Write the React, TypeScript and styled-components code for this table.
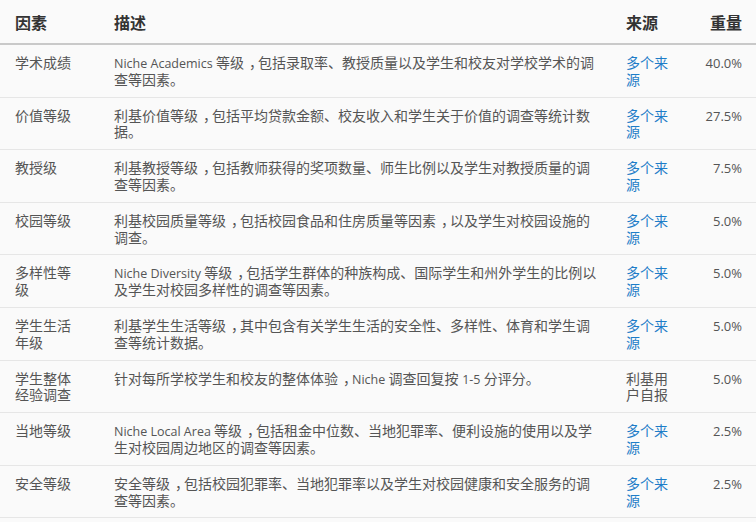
import React from "react";
import styled, { createGlobalStyle } from "styled-components";

const Global = createGlobalStyle`
	html, body {
		margin: 0;
		padding: 0;
		background: #fafafa;
	}
	body {
		font-family: "Open Sans", "Noto Sans CJK SC", sans-serif;
		font-size: 14px;
		color: #555;
	}
	*, *::before, *::after {
		box-sizing: border-box;
	}
`;

const Table = styled.table`
	width: 756px;
	border-collapse: collapse;
	table-layout: fixed;
`;

const Col = styled.col<{ $width: number }>`
	width: ${(p) => p.$width}px;
`;

const HeadCell = styled.th<{ $right?: boolean }>`
	text-align: ${(p) => (p.$right ? "right" : "left")};
	font-size: 16px;
	font-weight: 700;
	color: #333;
	padding: 0 14px 0 15px;
	height: 44px;
	border-bottom: 2px solid #c9c9c9;
	vertical-align: middle;
`;

const Row = styled.tr`
	border-bottom: 1px solid #e6e6e6;
`;

const Cell = styled.td<{ $right?: boolean; $padRight?: number }>`
	text-align: ${(p) => (p.$right ? "right" : "left")};
	vertical-align: top;
	line-height: 16.8px;
	padding: 10px ${(p) => p.$padRight ?? 14}px 8px 15px;
	height: 52px;
`;

const Weight = styled.span`
	font-size: 13px;
	line-height: 1;
`;

// latin runs are set a touch smaller than the CJK text around them
const Latin = styled.span`
	font-size: 12.5px;
	line-height: 1;
`;

// full-width comma sits in the middle of its cell in the original
const Comma = styled.span`
	padding-left: 5px;
	margin-right: -5px;
	line-height: 1;
`;

const Source = styled.a`
	color: #1e7dc8;
	text-decoration: none;
`;

type Item = {
	factor: string;
	desc: string;
	source: string;
	link: boolean;
	weight: string;
};

const items: Item[] = [
	{
		factor: "学术成绩",
		desc: "Niche Academics 等级，包括录取率、教授质量以及学生和校友对学校学术的调查等因素。",
		source: "多个来源",
		link: true,
		weight: "40.0%",
	},
	{
		factor: "价值等级",
		desc: "利基价值等级，包括平均贷款金额、校友收入和学生关于价值的调查等统计数据。",
		source: "多个来源",
		link: true,
		weight: "27.5%",
	},
	{
		factor: "教授级",
		desc: "利基教授等级，包括教师获得的奖项数量、师生比例以及学生对教授质量的调查等因素。",
		source: "多个来源",
		link: true,
		weight: "7.5%",
	},
	{
		factor: "校园等级",
		desc: "利基校园质量等级，包括校园食品和住房质量等因素，以及学生对校园设施的调查。",
		source: "多个来源",
		link: true,
		weight: "5.0%",
	},
	{
		factor: "多样性等级",
		desc: "Niche Diversity 等级，包括学生群体的种族构成、国际学生和州外学生的比例以及学生对校园多样性的调查等因素。",
		source: "多个来源",
		link: true,
		weight: "5.0%",
	},
	{
		factor: "学生生活年级",
		desc: "利基学生生活等级，其中包含有关学生生活的安全性、多样性、体育和学生调查等统计数据。",
		source: "多个来源",
		link: true,
		weight: "5.0%",
	},
	{
		factor: "学生整体经验调查",
		desc: "针对每所学校学生和校友的整体体验，Niche 调查回复按 1-5 分评分。",
		source: "利基用户自报",
		link: false,
		weight: "5.0%",
	},
	{
		factor: "当地等级",
		desc: "Niche Local Area 等级，包括租金中位数、当地犯罪率、便利设施的使用以及学生对校园周边地区的调查等因素。",
		source: "多个来源",
		link: true,
		weight: "2.5%",
	},
	{
		factor: "安全等级",
		desc: "安全等级，包括校园犯罪率、当地犯罪率以及学生对校园健康和安全服务的调查等因素。",
		source: "多个来源",
		link: true,
		weight: "2.5%",
	},
];

const renderText = (s: string) =>
	s
		.split(/([A-Za-z0-9][A-Za-z0-9 .\-]*|，)/)
		.filter(Boolean)
		.map((part, i) => {
			if (part === "，") return <Comma key={i}>，</Comma>;
			if (/^[A-Za-z0-9]/.test(part)) return <Latin key={i}>{part}</Latin>;
			return <React.Fragment key={i}>{part}</React.Fragment>;
		});

export default function App() {
	return (
		<>
			<Global />
			<Table>
				<colgroup>
					<Col $width={99} />
					<Col $width={512} />
					<Col $width={70} />
					<Col $width={75} />
				</colgroup>
				<thead>
					<tr>
						<HeadCell>因素</HeadCell>
						<HeadCell>描述</HeadCell>
						<HeadCell>来源</HeadCell>
						<HeadCell $right>重量</HeadCell>
					</tr>
				</thead>
				<tbody>
					{items.map((it) => (
						<Row key={it.factor}>
							<Cell $padRight={19}>{it.factor}</Cell>
							<Cell $padRight={13}>{renderText(it.desc)}</Cell>
							<Cell $padRight={5}>
								{it.link ? <Source href="#">{it.source}</Source> : it.source}
							</Cell>
							<Cell $right>
								<Weight>{it.weight}</Weight>
							</Cell>
						</Row>
					))}
				</tbody>
			</Table>
		</>
	);
}
